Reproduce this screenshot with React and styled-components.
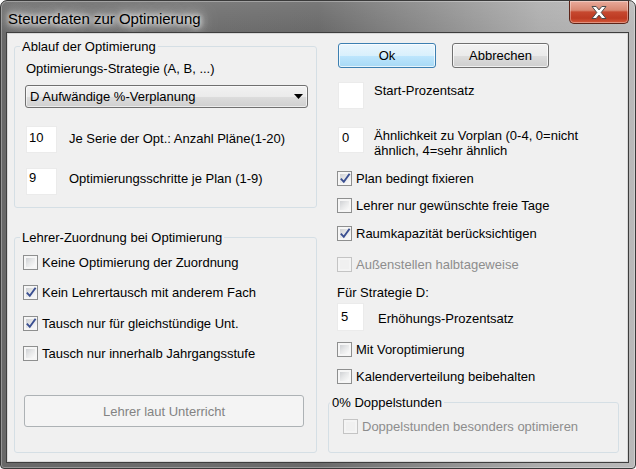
import React from 'react';
import styled, { createGlobalStyle } from 'styled-components';

const GlobalStyle = createGlobalStyle`
  html, body {
    margin: 0;
    padding: 0;
  }
  body {
    font-family: "Liberation Sans", Arial, sans-serif;
    font-size: 13px;
    color: #000;
  }
`;

const Frame = styled.div`
  width: 636px;
  height: 469px;
  box-sizing: border-box;
  display: flex;
  flex-direction: column;
  padding: 0 6px 5px 5px;
  border: 1px solid #3a3a3a;
  border-radius: 7px 7px 4px 4px;
  background:
    linear-gradient(180deg, rgba(255, 255, 255, 0.1) 0px, rgba(255, 255, 255, 0) 31px),
    linear-gradient(90deg, #686868 0%, #6e6e6e 30%, #6a6a6a 50%, #8c8c8c 68%, #adadad 85%, #b9b9b9 100%);
  box-shadow: inset 0 0 0 1px rgba(255, 255, 255, 0.3);
  overflow: hidden;
`;

const TitleBar = styled.div`
  height: 31px;
  display: flex;
  align-items: flex-start;
  justify-content: space-between;
`;

const Title = styled.div`
  margin: 9px 0 0 2px;
  font-size: 15px;
  line-height: 18px;
  text-shadow: 0 0 5px #fff, 0 0 9px #fff, 0 0 14px rgba(255, 255, 255, 0.9),
    0 0 20px rgba(255, 255, 255, 0.7);
`;

const CloseButton = styled.div`
  width: 60px;
  height: 23px;
  box-sizing: border-box;
  display: flex;
  align-items: center;
  justify-content: center;
  border: 1px solid #5c2418;
  border-top: none;
  border-radius: 0 0 5px 5px;
  background: linear-gradient(
    180deg,
    #e9ab9c 0%,
    #d88771 42%,
    #c6482f 50%,
    #bd3a22 78%,
    #d55a3b 100%
  );
  box-shadow: inset 0 0 0 1px rgba(255, 255, 255, 0.35);
`;

const Client = styled.div`
  flex: 1;
  display: flex;
  gap: 11px;
  padding: 6px 9px 9px 7px;
  background: #f0f0f0;
  border: 1px solid #3e3e3e;
  box-shadow: inset 0 0 0 1px #d8d8d8;
`;

const LeftColumn = styled.div`
  width: 303px;
  display: flex;
  flex-direction: column;
`;

const RightColumn = styled.div`
  width: 291px;
  display: flex;
  flex-direction: column;
`;

const RightStack = styled.div`
  display: flex;
  flex-direction: column;
  padding-left: 9px;
`;

const Group = styled.fieldset`
  margin: ${(p) => p.$mt || 0}px 0 0 0;
  padding: ${(p) => p.$pt || 0}px 7px 0 ${(p) => p.$pl || 10}px;
  box-sizing: border-box;
  min-width: 0;
  height: ${(p) => (p.$h ? `${p.$h}px` : 'auto')};
  flex: ${(p) => (p.$grow ? 1 : 'none')};
  border: 1px solid #d5dfe5;
  border-radius: 3px;
  display: flex;
  flex-direction: column;
  align-items: flex-start;
`;

/* Chrome puts the legend after the fieldset's left padding, so the
   offset is pulled back by that padding */
const Legend = styled.legend`
  margin-left: ${(p) => p.$ml}px;
  padding: 0 2px;
  font-size: 13px;
  line-height: 15px;
`;

const Text = styled.div`
  line-height: 15px;
  margin: ${(p) => p.$mt || 0}px 0 0 ${(p) => p.$ml || 0}px;
  white-space: nowrap;
`;

const Dropdown = styled.div`
  margin-top: 9px;
  width: 283px;
  height: 23px;
  box-sizing: border-box;
  display: flex;
  align-items: center;
  justify-content: space-between;
  padding: 0 4px 0 4px;
  border: 1px solid #707070;
  border-radius: 3px;
  background: linear-gradient(180deg, #f2f2f2 0%, #ebebeb 50%, #dddddd 51%, #cfcfcf 100%);
  box-shadow: inset 0 0 0 1px rgba(255, 255, 255, 0.6);
  line-height: 15px;
  white-space: nowrap;
`;

const FieldRow = styled.div`
  display: flex;
  align-items: flex-start;
  margin: ${(p) => p.$mt || 0}px 0 0 ${(p) => p.$ml || 0}px;
`;

const Field = styled.div`
  width: ${(p) => p.$w}px;
  height: ${(p) => p.$h}px;
  box-sizing: border-box;
  flex: none;
  padding: ${(p) => p.$pt}px 0 0 ${(p) => p.$pl}px;
  background: #fff;
  border: 1px solid #ebebeb;
  line-height: 15px;
`;

const FieldLabel = styled.div`
  margin: ${(p) => p.$offset}px 0 0 ${(p) => p.$gap}px;
  line-height: 15px;
  white-space: nowrap;
`;

const ButtonRow = styled.div`
  display: flex;
  gap: 16px;
  margin: 4px 0 0 1px;
`;

const Button = styled.div`
  width: ${(p) => p.$w}px;
  height: ${(p) => p.$h || 25}px;
  box-sizing: border-box;
  display: flex;
  align-items: center;
  justify-content: center;
  border: 1px solid #707070;
  border-radius: 3px;
  background: linear-gradient(180deg, #f2f2f2 0%, #ebebeb 50%, #dddddd 51%, #cfcfcf 100%);
  box-shadow: inset 0 0 0 1px rgba(255, 255, 255, 0.7);
  line-height: 15px;
`;

const DefaultButton = styled(Button)`
  border-color: #3c7fb1;
  background: linear-gradient(180deg, #eaf6fd 0%, #d9f0fc 50%, #bee6fd 51%, #a7d9f5 100%);
`;

const DisabledButton = styled(Button)`
  margin: 34px 0 0 1px;
  border-color: #adb2b5;
  background: #f4f4f4;
  box-shadow: none;
  color: #838383;
`;

const CheckRow = styled.div`
  display: flex;
  align-items: center;
  height: 16px;
  margin: ${(p) => p.$mt || 0}px 0 0 ${(p) => p.$ml || 0}px;
  color: ${(p) => (p.$disabled ? '#8d8d8d' : '#000')};
  white-space: nowrap;
`;

const Box = styled.span`
  width: 15px;
  height: 15px;
  box-sizing: border-box;
  flex: none;
  margin-right: 4px;
  padding: 2px;
  border: 1px solid ${(p) => (p.$disabled ? '#c4c4c4' : '#8e8f8f')};
  background: ${(p) => (p.$disabled ? '#f4f4f4' : '#f6f6f6')};
  display: flex;
`;

const BoxInner = styled.span`
  flex: 1;
  display: flex;
  align-items: center;
  justify-content: center;
  background: ${(p) =>
    p.$disabled
      ? '#f0f0f0'
      : 'linear-gradient(135deg, #cfd1d4 0%, #e6e7e8 45%, #fbfbfb 100%)'};
  overflow: visible;
`;

const CheckBox = ({ checked, disabled, label, mt, ml }) => (
  <CheckRow $mt={mt} $ml={ml} $disabled={disabled}>
    <Box $disabled={disabled}>
      <BoxInner $disabled={disabled}>
        {checked && (
          <svg width="11" height="11" viewBox="0 0 11 11" style={{ overflow: 'visible' }}>
            <path
              d="M0.8 5.6 L3.8 8.8 L9.6 0.8"
              fill="none"
              stroke="#3a4f91"
              strokeWidth="1.9"
            />
          </svg>
        )}
      </BoxInner>
    </Box>
    <span>{label}</span>
  </CheckRow>
);

const App = () => (
  <>
    <GlobalStyle />
    <Frame>
      <TitleBar>
        <Title>Steuerdaten zur Optimierung</Title>
        <CloseButton>
          <svg width="16" height="13" viewBox="0 0 16 13">
            <path
              d="M1 0.5 H5.2 L8 3.9 L10.8 0.5 H15 L10.2 6.5 L15 12.5 H10.8 L8 9.1 L5.2 12.5 H1 L5.8 6.5 Z"
              fill="#fff"
              stroke="#4a4a4a"
              strokeWidth="1"
              strokeLinejoin="round"
            />
          </svg>
        </CloseButton>
      </TitleBar>

      <Client>
        <LeftColumn>
          <Group $h={169}>
            <Legend $ml={-5}>Ablauf der Optimierung</Legend>
            <Text $mt={7} $ml={1}>Optimierungs-Strategie (A, B, ...)</Text>
            <Dropdown>
              <span>D Aufwändige %-Verplanung</span>
              <svg width="9" height="5" viewBox="0 0 9 5">
                <path d="M0 0 H9 L4.5 5 Z" fill="#000" />
              </svg>
            </Dropdown>
            <FieldRow $mt={18} $ml={1}>
              <Field $w={31} $h={27} $pt={3} $pl={2}>10</Field>
              <FieldLabel $offset={5} $gap={12}>
                Je Serie der Opt.: Anzahl Pläne(1-20)
              </FieldLabel>
            </FieldRow>
            <FieldRow $mt={15} $ml={1}>
              <Field $w={31} $h={27} $pt={1} $pl={2}>9</Field>
              <FieldLabel $offset={3} $gap={12}>
                Optimierungsschritte je Plan (1-9)
              </FieldLabel>
            </FieldRow>
          </Group>

          <Group $mt={22} $grow $pl={8} $pt={9}>
            <Legend $ml={-3}>Lehrer-Zuordnung bei Optimierung</Legend>
            <CheckBox label="Keine Optimierung der Zuordnung" />
            <CheckBox mt={14} checked label="Kein Lehrertausch mit anderem Fach" />
            <CheckBox mt={15} checked label="Tausch nur für gleichstündige Unt." />
            <CheckBox mt={14} label="Tausch nur innerhalb Jahrgangsstufe" />
            <DisabledButton $w={280} $h={32}>Lehrer laut Unterricht</DisabledButton>
          </Group>
        </LeftColumn>

        <RightColumn>
          <RightStack>
            <ButtonRow>
              <DefaultButton $w={98}>Ok</DefaultButton>
              <Button $w={97}>Abbrechen</Button>
            </ButtonRow>
            <FieldRow $mt={14} $ml={1}>
              <Field $w={26} $h={27} $pt={3} $pl={3} />
              <FieldLabel $offset={1} $gap={10}>Start-Prozentsatz</FieldLabel>
            </FieldRow>
            <FieldRow $mt={18} $ml={1}>
              <Field $w={26} $h={26} $pt={2} $pl={3}>0</Field>
              <FieldLabel $offset={1} $gap={10}>
                Ähnlichkeit zu Vorplan (0-4, 0=nicht
                <br />
                ähnlich, 4=sehr ähnlich
              </FieldLabel>
            </FieldRow>
            <CheckBox mt={12} checked label="Plan bedingt fixieren" />
            <CheckBox mt={11} label="Lehrer nur gewünschte freie Tage" />
            <CheckBox mt={12} checked label="Raumkapazität berücksichtigen" />
            <CheckBox mt={15} disabled label="Außenstellen halbtageweise" />
            <Text $mt={13}>Für Strategie D:</Text>
            <FieldRow $mt={3}>
              <Field $w={27} $h={28} $pt={5} $pl={3}>5</Field>
              <FieldLabel $offset={8} $gap={14}>Erhöhungs-Prozentsatz</FieldLabel>
            </FieldRow>
            <CheckBox mt={10} label="Mit Voroptimierung" />
            <CheckBox mt={11} label="Kalenderverteilung beibehalten" />
          </RightStack>

          <Group $mt={11} $h={58} $pl={14} $pt={8}>
            <Legend $ml={-13}>0% Doppelstunden</Legend>
            <CheckBox disabled label="Doppelstunden besonders optimieren" />
          </Group>
        </RightColumn>
      </Client>
    </Frame>
  </>
);

export default App;
